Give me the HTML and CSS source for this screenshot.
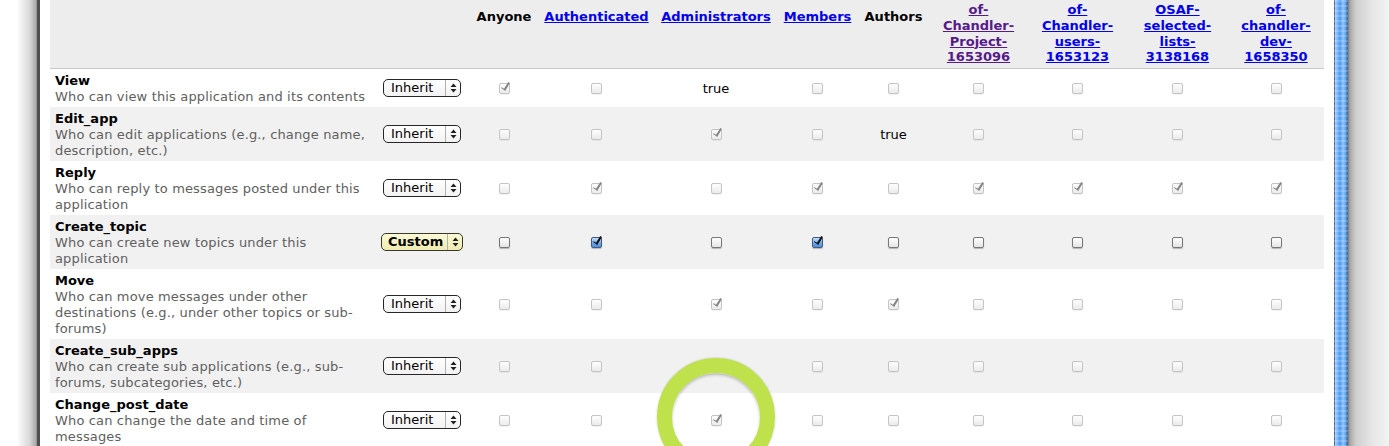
FILE: index.html
```html
<!DOCTYPE html>
<html>
<head>
<meta charset="utf-8">
<title>Permissions</title>
<link rel="stylesheet" href="styles.css">
</head>
<body>
<div class="desk">
  <div class="shade-l"></div>
  <div class="win">
    <table class="perm">
      <colgroup>
        <col class="c-desc"><col class="c-sel"><col class="c-any"><col class="c-auth"><col class="c-admin"><col class="c-mem"><col class="c-authors"><col class="c-g1"><col class="c-g2"><col class="c-g3"><col class="c-g4">
      </colgroup>
      <thead>
        <tr>
          <th></th>
          <th></th>
          <th class="h">Anyone</th>
          <th class="h"><a href="#">Authenticated</a></th>
          <th class="h"><a href="#">Administrators</a></th>
          <th class="h"><a href="#">Members</a></th>
          <th class="h">Authors</th>
          <th class="g"><a href="#" class="visited">of-Chandler-Project-1653096</a></th>
          <th class="g"><a href="#">of-Chandler-users-1653123</a></th>
          <th class="g"><a href="#">OSAF-selected-lists-3138168</a></th>
          <th class="g"><a href="#">of-chandler-dev-1658350</a></th>
        </tr>
      </thead>
      <tbody>
        <tr>
          <td class="desc"><div class="t">View</div><div class="d">Who can view this application and its contents</div></td>
          <td class="selc"><span class="sel"><select><option>Inherit</option></select><span class="arr"><svg width="7" height="10" viewBox="0 0 7 10"><path d="M0.5 4 L3.5 0.5 L6.5 4Z M0.5 6 L3.5 9.5 L6.5 6Z"/></svg></span></span></td>
          <td class="cell"><span class="cb on"></span></td>
          <td class="cell"><span class="cb"></span></td>
          <td class="cell tv">true</td>
          <td class="cell"><span class="cb"></span></td>
          <td class="cell"><span class="cb"></span></td>
          <td class="cell"><span class="cb"></span></td>
          <td class="cell"><span class="cb"></span></td>
          <td class="cell"><span class="cb"></span></td>
          <td class="cell"><span class="cb"></span></td>
        </tr>
        <tr>
          <td class="desc"><div class="t">Edit_app</div><div class="d">Who can edit applications (e.g., change name, description, etc.)</div></td>
          <td class="selc"><span class="sel"><select><option>Inherit</option></select><span class="arr"><svg width="7" height="10" viewBox="0 0 7 10"><path d="M0.5 4 L3.5 0.5 L6.5 4Z M0.5 6 L3.5 9.5 L6.5 6Z"/></svg></span></span></td>
          <td class="cell"><span class="cb"></span></td>
          <td class="cell"><span class="cb"></span></td>
          <td class="cell"><span class="cb on"></span></td>
          <td class="cell"><span class="cb"></span></td>
          <td class="cell tv">true</td>
          <td class="cell"><span class="cb"></span></td>
          <td class="cell"><span class="cb"></span></td>
          <td class="cell"><span class="cb"></span></td>
          <td class="cell"><span class="cb"></span></td>
        </tr>
        <tr>
          <td class="desc"><div class="t">Reply</div><div class="d">Who can reply to messages posted under this application</div></td>
          <td class="selc"><span class="sel"><select><option>Inherit</option></select><span class="arr"><svg width="7" height="10" viewBox="0 0 7 10"><path d="M0.5 4 L3.5 0.5 L6.5 4Z M0.5 6 L3.5 9.5 L6.5 6Z"/></svg></span></span></td>
          <td class="cell"><span class="cb"></span></td>
          <td class="cell"><span class="cb on"></span></td>
          <td class="cell"><span class="cb"></span></td>
          <td class="cell"><span class="cb on"></span></td>
          <td class="cell"><span class="cb"></span></td>
          <td class="cell"><span class="cb on"></span></td>
          <td class="cell"><span class="cb on"></span></td>
          <td class="cell"><span class="cb on"></span></td>
          <td class="cell"><span class="cb on"></span></td>
        </tr>
        <tr>
          <td class="desc"><div class="t">Create_topic</div><div class="d">Who can create new topics under this application</div></td>
          <td class="selc"><span class="sel custom"><select><option>Custom</option></select><span class="arr"><svg width="7" height="10" viewBox="0 0 7 10"><path d="M0.5 4 L3.5 0.5 L6.5 4Z M0.5 6 L3.5 9.5 L6.5 6Z"/></svg></span></span></td>
          <td class="cell"><span class="cb en"></span></td>
          <td class="cell"><span class="cb en on"></span></td>
          <td class="cell"><span class="cb en"></span></td>
          <td class="cell"><span class="cb en on"></span></td>
          <td class="cell"><span class="cb en"></span></td>
          <td class="cell"><span class="cb en"></span></td>
          <td class="cell"><span class="cb en"></span></td>
          <td class="cell"><span class="cb en"></span></td>
          <td class="cell"><span class="cb en"></span></td>
        </tr>
        <tr>
          <td class="desc"><div class="t">Move</div><div class="d">Who can move messages under other destinations (e.g., under other topics or sub-forums)</div></td>
          <td class="selc"><span class="sel"><select><option>Inherit</option></select><span class="arr"><svg width="7" height="10" viewBox="0 0 7 10"><path d="M0.5 4 L3.5 0.5 L6.5 4Z M0.5 6 L3.5 9.5 L6.5 6Z"/></svg></span></span></td>
          <td class="cell"><span class="cb"></span></td>
          <td class="cell"><span class="cb"></span></td>
          <td class="cell"><span class="cb on"></span></td>
          <td class="cell"><span class="cb"></span></td>
          <td class="cell"><span class="cb on"></span></td>
          <td class="cell"><span class="cb"></span></td>
          <td class="cell"><span class="cb"></span></td>
          <td class="cell"><span class="cb"></span></td>
          <td class="cell"><span class="cb"></span></td>
        </tr>
        <tr>
          <td class="desc"><div class="t">Create_sub_apps</div><div class="d">Who can create sub applications (e.g., sub-forums, subcategories, etc.)</div></td>
          <td class="selc"><span class="sel"><select><option>Inherit</option></select><span class="arr"><svg width="7" height="10" viewBox="0 0 7 10"><path d="M0.5 4 L3.5 0.5 L6.5 4Z M0.5 6 L3.5 9.5 L6.5 6Z"/></svg></span></span></td>
          <td class="cell"><span class="cb"></span></td>
          <td class="cell"><span class="cb"></span></td>
          <td class="cell"><span class="cb on"></span></td>
          <td class="cell"><span class="cb"></span></td>
          <td class="cell"><span class="cb"></span></td>
          <td class="cell"><span class="cb"></span></td>
          <td class="cell"><span class="cb"></span></td>
          <td class="cell"><span class="cb"></span></td>
          <td class="cell"><span class="cb"></span></td>
        </tr>
        <tr>
          <td class="desc"><div class="t">Change_post_date</div><div class="d">Who can change the date and time of messages</div></td>
          <td class="selc"><span class="sel"><select><option>Inherit</option></select><span class="arr"><svg width="7" height="10" viewBox="0 0 7 10"><path d="M0.5 4 L3.5 0.5 L6.5 4Z M0.5 6 L3.5 9.5 L6.5 6Z"/></svg></span></span></td>
          <td class="cell"><span class="cb"></span></td>
          <td class="cell"><span class="cb"></span></td>
          <td class="cell"><span class="cb on"></span></td>
          <td class="cell"><span class="cb"></span></td>
          <td class="cell"><span class="cb"></span></td>
          <td class="cell"><span class="cb"></span></td>
          <td class="cell"><span class="cb"></span></td>
          <td class="cell"><span class="cb"></span></td>
          <td class="cell"><span class="cb"></span></td>
        </tr>
      </tbody>
    </table>
  </div>
  <div class="bar"></div>
  <div class="shade-r"></div>
</div>
<div class="ring"></div>
</body>
</html>
```

FILE: styles.css
```css
html, body {
  margin: 0;
  padding: 0;
  background: #fff;
  overflow: hidden;
}
body {
  font-family: "DejaVu Sans", Verdana, sans-serif;
  font-size: 13px;
  color: #000;
  height: 446px;
}
.desk {
  display: flex;
  height: 446px;
  overflow: hidden;
}
.shade-l {
  flex: none;
  width: 37px;
  background: linear-gradient(to right, #ffffff 0, #ffffff 45%, #d8d8d8 80%, #aaaaaa 97%, #8a8a8a 100%);
}
.win {
  flex: none;
  border-left: 3px solid #4e4e4e;
  padding: 0 10px;
  box-sizing: border-box;
  width: 1297px;
  background: #fff;
}
.bar {
  flex: none;
  width: 14px;
  background:
    repeating-linear-gradient(to bottom, rgba(255,255,255,0.18) 0 2px, rgba(0,0,0,0) 2px 5px),
    linear-gradient(to right, #50688c 0, #50688c 1px, #a9d2fb 1px, #6fb0f7 4px, #4c97ee 6px, #8cc6ff 9px, #5aa0ee 12px, #4a6a92 13px, #4a6a92 14px);
}
.shade-r {
  flex: none;
  width: 41px;
  background: linear-gradient(to right, #7a7a7a 0, #a8a8a8 2px, #cfcfcf 8px, #e6e6e6 24px, #f3f3f3 100%);
}

.perm {
  table-layout: fixed;
  width: 1274px;
  border-collapse: collapse;
  border-spacing: 0;
}
.c-desc { width: 320px; }
.c-sel { width: 100px; }
.c-any { width: 68px; }
.c-auth { width: 117px; }
.c-admin { width: 122px; }
.c-mem { width: 81px; }
.c-authors { width: 71px; }
.c-g1 { width: 99px; }
.c-g2 { width: 99px; }
.c-g3 { width: 101px; }
.c-g4 { width: 96px; }

thead th {
  background: #ededed;
  border-bottom: 1px solid #c8c8c8;
  font-weight: bold;
  font-size: 13px;
  vertical-align: top;
  text-align: center;
  padding: 0;
}
th.h {
  padding: 9px 2px 0;
  line-height: 16px;
  white-space: nowrap;
}
th.g {
  padding: 2px 7px 3px;
  line-height: 15.75px;
}
th a {
  color: #0000ee;
  text-decoration: underline;
}
th a.visited {
  color: #551a8b;
}

tbody tr:nth-child(even) td {
  background: #f1f1f1;
}
td {
  padding: 0;
}
td.desc {
  padding: 4px 2px 2px 5px;
  vertical-align: top;
  line-height: 16px;
}
.t {
  font-weight: bold;
  font-size: 13px;
}
.d {
  color: #606060;
  font-size: 13px;
  letter-spacing: 0.15px;
}
td.selc {
  text-align: center;
  vertical-align: middle;
  padding-left: 4px;
}
td.cell {
  text-align: center;
  vertical-align: middle;
  padding-bottom: 2px;
}
td.tv {
  font-size: 13px;
  padding-bottom: 0;
}

.sel {
  display: inline-flex;
  vertical-align: middle;
  width: 76px;
  height: 16px;
  border: 1px solid #262626;
  border-radius: 5px;
  background: linear-gradient(#ffffff, #f2f2f2);
  overflow: hidden;
}
.sel select {
  -webkit-appearance: none;
  appearance: none;
  flex: 1;
  min-width: 0;
  border: 0;
  margin: 0;
  padding: 0 0 0 7px;
  height: 16px;
  line-height: 16px;
  background: transparent;
  font-family: "DejaVu Sans", Verdana, sans-serif;
  font-size: 13px;
  color: #000;
  outline: none;
}
.sel .arr {
  flex: none;
  width: 14px;
  border-left: 1px solid #b0b0b0;
  display: flex;
  align-items: center;
  justify-content: center;
}
.sel .arr svg {
  fill: #222;
  display: block;
}
.sel.custom {
  width: 80px;
  background: linear-gradient(#fbfad6, #eeeab0);
  border-color: #3a3a2a;
}
.sel.custom select {
  font-weight: bold;
  padding-left: 6px;
}

.cb {
  display: inline-block;
  vertical-align: middle;
  box-sizing: border-box;
  width: 11px;
  height: 11px;
  border: 1px solid #c4c4c4;
  border-radius: 2px;
  background: linear-gradient(#fefefe, #ebebeb);
  box-shadow: 0 1px 0 rgba(0,0,0,0.05);
  position: relative;
}
.cb.on::after {
  content: "";
  position: absolute;
  left: 3px;
  top: -3px;
  width: 3px;
  height: 8px;
  border-right: 2px solid #858585;
  border-bottom: 1px solid #858585;
  transform: rotate(32deg);
}
.cb.en {
  border-color: #777;
  background: linear-gradient(#ffffff, #e4e4e4);
  box-shadow: 0 1px 1px rgba(0,0,0,0.25);
}
.cb.en.on {
  border-color: #435a7c;
  background: linear-gradient(#c7e0fb, #6fa8ea 55%, #4f8fe0);
}
.cb.en.on::after {
  border-color: #111;
}

.ring {
  position: absolute;
  left: 657px;
  top: 358px;
  width: 88px;
  height: 88px;
  border: 15px solid #bee14c;
  border-radius: 50%;
  box-shadow: 0 0 2px rgba(0,0,0,0.25), inset 0 2px 3px rgba(0,0,0,0.22);
}
```
